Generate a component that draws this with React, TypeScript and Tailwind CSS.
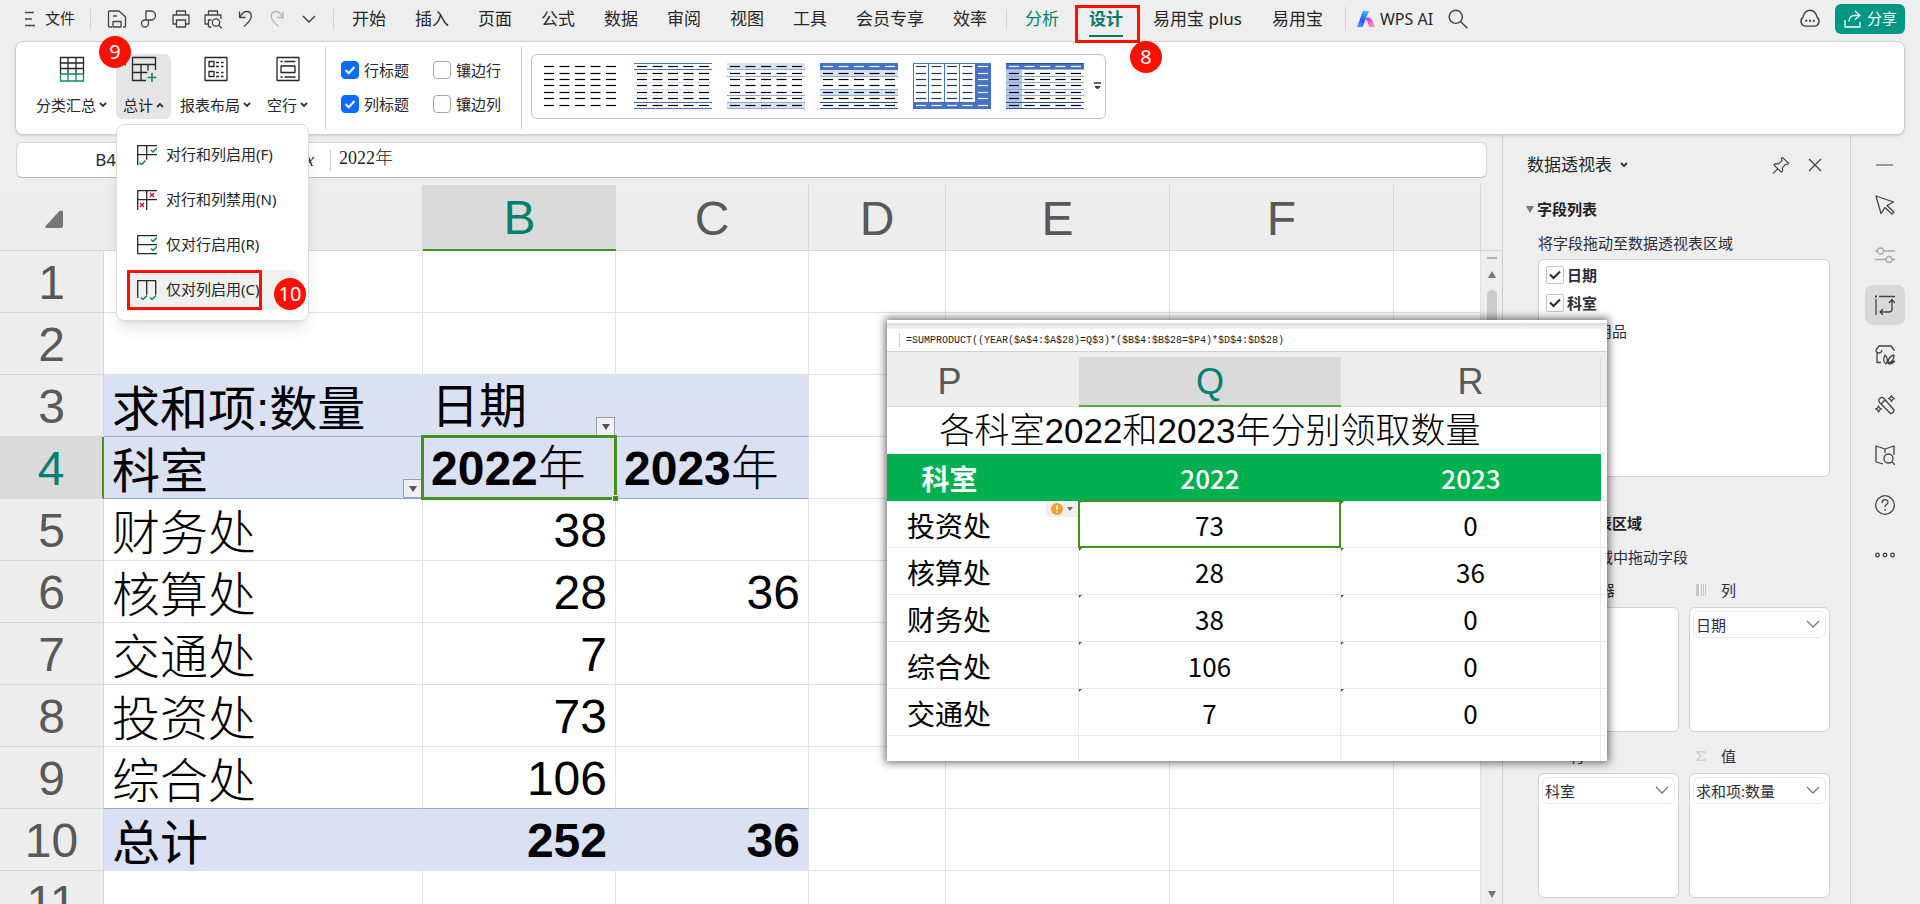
import { useState, type ReactNode } from 'react';
import { clsx } from 'clsx';

type Line = { label: string; values: [string, string]; kind?: 'head' | 'total' };

const tabs = ['开始', '插入', '页面', '公式', '数据', '审阅', '视图', '工具', '会员专享', '效率'];

const sheetRows: Line[] = [
  { label: '', values: ['', ''] },
  { label: '', values: ['', ''] },
  { label: '求和项:数量', values: ['日期', ''], kind: 'head' },
  { label: '科室', values: ['2022年', '2023年'], kind: 'head' },
  { label: '财务处', values: ['38', ''] },
  { label: '核算处', values: ['28', '36'] },
  { label: '交通处', values: ['7', ''] },
  { label: '投资处', values: ['73', ''] },
  { label: '综合处', values: ['106', ''] },
  { label: '总计', values: ['252', '36'], kind: 'total' },
  { label: '', values: ['', ''] },
];

const formulaRows = [
  ['投资处', '73', '0'],
  ['核算处', '28', '36'],
  ['财务处', '38', '0'],
  ['综合处', '106', '0'],
  ['交通处', '7', '0'],
];

function Icon({ children, className = 'h-5 w-5', box = 20 }: { children: ReactNode; className?: string; box?: number }) {
  return (
    <svg
      viewBox={`0 0 ${box} ${box}`}
      className={clsx('shrink-0', className)}
      fill="none"
      stroke="currentColor"
      strokeWidth="1.3"
      strokeLinejoin="round"
      aria-hidden="true"
    >
      {children}
    </svg>
  );
}

function Caret({ up = false }: { up?: boolean }) {
  return (
    <svg viewBox="0 0 8 6" className="h-1.5 w-2 shrink-0" fill="none" stroke="#333" strokeWidth="1.8" aria-hidden="true">
      <path d={up ? 'M1 5l3-3 3 3' : 'M1 1l3 3 3-3'} />
    </svg>
  );
}

function Badge({ children, className }: { children: ReactNode; className: string }) {
  return (
    <span
      className={clsx(
        'absolute z-40 flex h-8 w-8 items-center justify-center rounded-full bg-[#ff0f00] text-xl font-normal text-white',
        className,
      )}
    >
      {children}
    </span>
  );
}

function Divider({ className }: { className: string }) {
  return <span className={clsx('w-px shrink-0 bg-[#cfcfcf]', className)} />;
}

function TopBar() {
  return (
    <header className="relative z-20 flex h-[41px] shrink-0 items-center pb-1 pl-6 pr-[15px] text-[17px] text-[#262626]">
      <button className="flex items-center gap-2.5 text-[15px]">
        <svg viewBox="0 0 11 16" className="h-4 w-[11px]" stroke="#444" strokeWidth="1.3" aria-hidden="true">
          <path d="M1 1.500h9M1 8h7M1 14.500h10" />
        </svg>
        文件
      </button>
      <Divider className="ml-[15px] h-5" />

      <div className="ml-4 flex items-center gap-3 text-[#444]">
        <button title="保存">
          <Icon>
            <path d="M5 18H2.500a1 1 0 0 1-1-1V3a1 1 0 0 1 1-1H12l6.500 6v9a1 1 0 0 1-1 1H16M6 18v-5.500h8V18zM6 7h4" />
          </Icon>
        </button>
        <button title="输出为PDF">
          <Icon>
            <path d="M7 11V2h5a4.500 4.500 0 0 1 0 9H6a3.500 3.500 0 1 0 3.500 3.500V11" />
          </Icon>
        </button>
        <button title="打印">
          <Icon>
            <path d="M5.500 6V2h9v4M5 15H2V6h16v9h-3M5.500 11h9v7h-9z" />
          </Icon>
        </button>
        <button title="打印预览">
          <Icon>
            <path d="M5.500 6V2h9v4M5 15H2V6h16v4M5.500 18v-7h3M5.500 18h3" />
            <circle cx="13" cy="13.500" r="3.700" />
            <path d="M15.800 16.200l3 3" />
          </Icon>
        </button>
        <button title="撤销">
          <Icon>
            <path d="M4.500 2.500v6h6M5 8c2-4 4-5.500 6.500-5.500 3 0 4.800 2 4.800 4.700 0 4-4 7-7.300 10.300" />
          </Icon>
        </button>
        <button title="恢复" className="text-[#b5b5b5]">
          <Icon>
            <path d="M16 2.500v6h-6M15.500 8c-2-4-4-5.500-6.500-5.500-3 0-4.800 2-4.800 4.700 0 4 4 7 7.300 10.300" />
          </Icon>
        </button>
        <button title="更多">
          <Icon>
            <path d="M4 7l6 6 6-6" strokeWidth="1.500" />
          </Icon>
        </button>
      </div>
      <Divider className="ml-3.5 h-5" />

      <nav className="ml-[18px] flex h-9 items-center gap-[29px] whitespace-nowrap">
        {tabs.map((tab) => (
          <button key={tab}>{tab}</button>
        ))}
      </nav>
      <Divider className="ml-[19px] h-5" />
      <nav className="ml-[18px] flex items-center gap-[30px] whitespace-nowrap">
        <button className="text-[#008573]">分析</button>
        <button className="relative flex h-9 items-center font-bold text-[#007a68]">
          设计
          <span className="absolute inset-x-0 bottom-0 h-0.5 bg-[#007a68]" />
          <span className="absolute -bottom-1.5 -left-3.5 -right-[17px] top-1 border-3 border-[#ff0f00]" />
          <Badge className="-right-[39px] top-10">8</Badge>
        </button>
        <button>易用宝 plus</button>
        <button>易用宝</button>
      </nav>
      <Divider className="ml-[22px] h-6" />

      <button className="ml-2.5 flex items-center gap-1 whitespace-nowrap text-base">
        <svg viewBox="0 0 20 18" className="h-[18px] w-5" aria-hidden="true">
          <defs>
            <linearGradient id="aiLeft" x1="0" y1="1" x2="0.6" y2="0">
              <stop offset="0" stopColor="#5fa0ff" />
              <stop offset="0.5" stopColor="#2c55f5" />
              <stop offset="1" stopColor="#37b7ff" />
            </linearGradient>
            <linearGradient id="aiRight" x1="0" y1="0" x2="0.7" y2="1">
              <stop offset="0" stopColor="#a238ff" />
              <stop offset="0.6" stopColor="#f850d8" />
              <stop offset="1" stopColor="#ffa08a" />
            </linearGradient>
          </defs>
          <path d="M7 1h6L6.500 17H1z" fill="url(#aiLeft)" />
          <path d="M9 8.500c3-2 6-1 7 1.500l3 7h-5.500l-2-5c-.6-1.500-1.500-2.500-2.500-3.500z" fill="url(#aiRight)" />
        </svg>
        WPS AI
      </button>
      <button title="搜索" className="ml-3.5 text-[#444]">
        <Icon className="h-[22px] w-[22px]">
          <circle cx="8" cy="8" r="6" />
          <path d="M12.500 12.500L18.500 18.500" />
        </Icon>
      </button>

      <div className="ml-auto flex items-center gap-3.5">
        <button title="云服务" className="text-[#444]">
          <Icon className="h-[22px] w-[22px]">
            <path d="M6 16.500a4.500 4.500 0 0 1-2.500-8C4.500 4.500 7 2 10 2s5.500 2.500 6.500 6.500a4.500 4.500 0 0 1-2.500 8z" />
            <path d="M5.700 11.500h1.800M9.100 11.500h1.800M12.500 11.500h1.800" strokeWidth="1.800" />
          </Icon>
        </button>
        <button className="flex h-[30px] items-center gap-1 rounded-md bg-[#009884] px-2 text-[15px] text-white">
          <Icon>
            <path d="M12 2l5 4.500-5 4M17 6.500h-5c-4 0-6 2-6 6M2 11v7h15v-5" />
          </Icon>
          分享
        </button>
      </div>
    </header>
  );
}

function RibbonButton({ icon, label, active = false, onClick }: { icon: ReactNode; label: string; active?: boolean; onClick?: () => void }) {
  return (
    <button
      onClick={onClick}
      className={clsx(
        'flex h-[65px] flex-col items-center justify-between rounded-md px-[7px] pb-0.5 pt-0.5 text-[15px]',
        active && 'bg-[#e5e5e5]',
      )}
    >
      {icon}
      <span className="flex items-center gap-[3px] whitespace-nowrap">
        {label}
        <Caret up={active} />
      </span>
    </button>
  );
}

function RibbonCheck({ label, checked = false }: { label: string; checked?: boolean }) {
  return (
    <label className="flex items-center gap-[5px] whitespace-nowrap">
      <span className="grid h-[18px] w-[18px]">
        <input
          type="checkbox"
          defaultChecked={checked}
          className="peer col-start-1 row-start-1 h-[18px] w-[18px] appearance-none rounded-sm border border-[#a5a5a5] bg-white checked:border-[#0a6cff] checked:bg-[#0a6cff]"
        />
        <svg viewBox="0 0 18 18" className="pointer-events-none col-start-1 row-start-1 hidden h-[18px] w-[18px] peer-checked:block" fill="none" stroke="#fff" strokeWidth="2">
          <path d="M4.500 9l3.200 3.200L13.500 6" />
        </svg>
      </span>
      {label}
    </label>
  );
}

const dashRows = [3, 10, 16, 22, 29, 35, 42];

function StyleThumb({ index }: { index: number }) {
  const dash = (y: number, color: string, from = 0, to = 5) =>
    [0, 1, 2, 3, 4].slice(from, to).map((c) => (
      <path key={`${y}-${c}`} d={`M${3 + c * 15.5} ${y + 0.5}h10`} stroke={color} strokeWidth="1.2" />
    ));
  const rule = (y: number, color: string) => <path d={`M0 ${y + 0.5}h78`} stroke={color} strokeWidth="1" />;

  return (
    <button title={`样式 ${index + 1}`}>
      <svg viewBox="0 0 78 46" className="h-[46px] w-[78px]" aria-hidden="true">
        {index === 1 && (
          <>
            {[0, 6, 39, 45].map((y) => <g key={y}>{rule(y, '#4472c4')}</g>)}
            {[13, 19, 26, 32].map((y) => <g key={y}>{rule(y, '#d9e1f2')}</g>)}
          </>
        )}
        {index === 2 && (
          <>
            <path d="M0 0h78v6H0zM0 39h78v6H0z" fill="#d9e1f2" />
            {[6, 13, 32, 39, 45].map((y) => <g key={y}>{rule(y, '#8ea9db')}</g>)}
          </>
        )}
        {index === 3 && (
          <>
            <path d="M0 0h78v7H0z" fill="#4472c4" />
            <path d="M0 7h78v6H0zM0 26h78v6H0z" fill="#d9e1f2" />
            {[13, 26, 32].map((y) => <g key={y}>{rule(y, '#8ea9db')}</g>)}
            {[39, 45].map((y) => <g key={y}>{rule(y, '#305496')}</g>)}
          </>
        )}
        {index === 4 && (
          <>
            <path d="M62 0h16v46H62zM0 39h78v7H0z" fill="#4472c4" />
            <path d="M.5 0v46M15.500 0v46M31.500 0v46M46.500 0v46M0 .5h78" stroke="#4472c4" />
          </>
        )}
        {index === 5 && (
          <>
            <path d="M0 0h78v6H0z" fill="#4472c4" />
            <path d="M0 6h16v40H0z" fill="#b4c6e7" />
            {[6, 13, 19, 26, 32].map((y) => <g key={y}>{rule(y, '#8ea9db')}</g>)}
            {[0, 39, 45].map((y) => <g key={y}>{rule(y, '#305496')}</g>)}
          </>
        )}
        {dashRows.map((y, r) => {
          if (index === 4) {
            return (
              <g key={y}>
                {dash(y, r === 6 ? '#fff' : '#1f3864', 0, 4)}
                {dash(y, '#fff', 4)}
              </g>
            );
          }
          return <g key={y}>{dash(y, r === 0 && index > 2 ? '#fff' : '#000')}</g>;
        })}
      </svg>
    </button>
  );
}

const tick = (x: number, y: number) => <path d={`M${x} ${y}l2 2 4-4`} stroke="#0d8f66" strokeWidth="1.6" />;
const cross = (x: number, y: number) => <path d={`M${x} ${y}l4 4M${x + 4} ${y}l-4 4`} stroke="#c8103e" strokeWidth="1.4" />;

const totalOptions = [
  { label: '对行和列启用(F)', icon: <Icon><path d="M.7 20V.7H20M.7 9.700H20M9.700.7v14" />{tick(14, 5)}{tick(2.5, 17.5)}</Icon> },
  { label: '对行和列禁用(N)', icon: <Icon><path d="M.7 20V.7H20M.7 9.700H20M9.700.7V20" />{cross(13, 3)}{cross(3, 13)}</Icon> },
  { label: '仅对行启用(R)', icon: <Icon><path d="M20 .7H.7v18H20M.7 9.700H20" />{tick(14, 4.5)}{tick(14, 13.5)}</Icon> },
  { label: '仅对列启用(C)', icon: <Icon><path d="M.7 18V.7h18v14M9.700.7v14" />{tick(4, 17.5)}{tick(13, 17.5)}</Icon> },
];

function TotalMenu() {
  return (
    <div
      role="menu"
      className="absolute left-0 top-[70px] z-30 flex w-[193px] flex-col gap-[5px] rounded-lg border border-[#dcdcdc] bg-white px-2.5 py-2.5 text-[15px] text-[#262626] shadow-lg"
    >
      {totalOptions.map((option, i) => (
        <button
          key={option.label}
          role="menuitem"
          className={clsx(
            'relative flex h-10 items-center gap-[9px] whitespace-nowrap rounded-md pl-2.5',
            i === 3 && 'bg-[#f0f0f0]',
          )}
        >
          {option.icon}
          {option.label}
          {i === 3 && (
            <>
              <span className="absolute inset-y-0 left-0 w-[135px] border-3 border-[#ff0f00]" />
              <Badge className="-right-2 top-2">10</Badge>
            </>
          )}
        </button>
      ))}
    </div>
  );
}

function Ribbon() {
  const [open, setOpen] = useState(true);

  return (
    <section className="relative z-10 mx-[15px] flex h-[94px] shrink-0 items-center rounded-lg border border-[#cfcfcf] bg-white pb-1 pl-[13px] text-[15px] text-[#262626] shadow">
      <div className="flex gap-0.5">
        <RibbonButton
          label="分类汇总"
          icon={
            <Icon className="h-[26px] w-[26px]" box={26}>
              <path d="M1.500 18V1.500h23V18M9 1.500V18M17 1.500V18M1.500 7h23M1.500 12.500h23" />
              <path d="M1.500 18h23v7h-23zM9 18v7M17 18v7" stroke="#0d8f66" />
            </Icon>
          }
        />
        <div className="relative">
          <RibbonButton
            label="总计"
            active={open}
            onClick={() => setOpen(!open)}
            icon={
              <Icon className="h-[26px] w-[26px]" box={26}>
                <path d="M15 24.500H1.500v-23h23V14M1.500 8.500h23M10 8.500v16M1.500 16.500h15M17 8.500v6" />
                <path d="M21 17v9M16.500 21.500h9" stroke="#0d8f66" strokeWidth="1.700" />
              </Icon>
            }
          />
          <Badge className="-left-[17px] -top-[18px]">
            9
            <svg viewBox="0 0 8 8" className="absolute bottom-0.5 right-1 h-2 w-2" fill="#ff0f00" aria-hidden="true">
              <path d="M0 4l7-4v8z" />
            </svg>
          </Badge>
          {open && <TotalMenu />}
        </div>
        <RibbonButton
          label="报表布局"
          icon={
            <Icon className="h-[26px] w-[26px]" box={26}>
              <path d="M2 1.500h22v23H2zM6 5.500h5v5H6zM6 15.500h5v5H6z" />
              <path d="M13 6.500h3M18 6.500h2.500M13 10.500h3M18 10.500h2.500M13 16.500h3M18 16.500h2.500M13 20.500h3M18 20.500h2.500" />
            </Icon>
          }
        />
        <RibbonButton
          label="空行"
          icon={
            <Icon className="h-[26px] w-[26px]" box={26}>
              <path d="M2 1.500h22v23H2zM6 10h14v6.500H6z" />
              <path d="M5.500 5.500h2M9.500 5.500h11M5.500 21h2M9.500 21h11" />
            </Icon>
          }
        />
      </div>
      <Divider className="ml-2.5 mt-1 h-[82px]" />

      <div className="ml-[15px] mt-0.5 grid grid-cols-[92px_80px] gap-y-3">
        <RibbonCheck label="行标题" checked />
        <RibbonCheck label="镶边行" />
        <RibbonCheck label="列标题" checked />
        <RibbonCheck label="镶边列" />
      </div>
      <Divider className="ml-2 mt-1 h-[82px]" />

      <div className="ml-[9px] flex h-[65px] items-center gap-[15px] rounded-md border border-[#c4c4c4] px-[9px]">
        {[0, 1, 2, 3, 4, 5].map((i) => (
          <StyleThumb key={i} index={i} />
        ))}
        <button title="更多样式" className="-ml-1.5 -mr-1.5 flex h-full items-center">
          <svg viewBox="0 0 9 9" className="h-[9px] w-[9px]" fill="#333" stroke="#333" aria-hidden="true">
            <path d="M1 1h7" strokeWidth="1.500" />
            <path d="M2 4.500h5L4.500 7z" />
          </svg>
        </button>
      </div>
    </section>
  );
}

function FormulaBar() {
  return (
    <div className="ml-4 mr-[15px] mt-[7px] flex h-9 shrink-0 items-center rounded-md border border-[#d5d5d5] border-b-[#bdbdbd] bg-white text-[#262626]">
      <input aria-label="名称框" defaultValue="B4" className="w-[99px] bg-transparent text-right text-[17px] outline-none" />
      <span className="ml-[185px] font-['Liberation_Serif'] text-lg italic">fx</span>
      <Divider className="ml-4 h-[21px]" />
      <input
        aria-label="编辑栏"
        defaultValue="2022年"
        className="ml-2 min-w-0 flex-1 bg-transparent pb-1 font-['Liberation_Serif','Noto_Sans_CJK_SC',serif] text-lg font-light outline-none"
      />
    </div>
  );
}

function FilterArrow() {
  return (
    <button title="筛选" className="absolute bottom-0 right-0 z-10 flex h-[19px] w-[19px] items-center justify-center border border-[#9a9db0] bg-[#f0f0f2]">
      <svg viewBox="0 0 8 6" className="h-1.5 w-2" fill="#555" aria-hidden="true">
        <path d="M0 0h8L4 6z" />
      </svg>
    </button>
  );
}

function Sheet() {
  return (
    <div className="mt-[7px] flex min-h-0 flex-1">
      <div className="min-w-0 flex-1 overflow-hidden bg-white">
        <table className="w-full table-fixed border-separate border-spacing-0 font-['Liberation_Sans','Noto_Sans_CJK_SC',sans-serif] text-5xl leading-[48px] text-black">
          <colgroup>
            <col className="w-[104px]" />
            <col className="w-[319px]" />
            <col className="w-[193px]" />
            <col className="w-[193px]" />
            <col className="w-[137px]" />
            <col className="w-[224px]" />
            <col className="w-[224px]" />
            <col />
          </colgroup>
          <thead>
            <tr className="h-[66px] bg-[#ededed] text-[#595959]">
              <th className="border-b border-[#d6d6d6] bg-[#ededed] p-0 pt-0.5">
                <svg viewBox="0 0 18 18" className="ml-[45px] h-[18px] w-[18px]" fill="#777" aria-hidden="true">
                  <path d="M16 0.500Q18 0 18 2v14q0 2-2 2H2q-2.500 0-1.500-2L14.500 1z" />
                </svg>
              </th>
              {['A', 'B', 'C', 'D', 'E', 'F', ''].map((col) => (
                <th
                  key={col}
                  className={clsx(
                    'p-0 pt-0.5 font-normal',
                    col === 'B' ? 'border-b-2 border-[#43911f] bg-[#dadada] text-[#008070]' : 'border-b border-r border-[#d6d6d6]',
                  )}
                >
                  {col}
                </th>
              ))}
            </tr>
          </thead>
          <tbody>
            {sheetRows.map((row, i) => {
              const n = i + 1;
              const fill = row.kind !== undefined;
              const cell = clsx(
                'relative h-[62px] whitespace-nowrap border-b border-r px-2 pb-0',
                fill ? 'border-r-[#dae1f2] bg-[#dae1f2]' : 'border-r-[#e2e2e2]',
                n === 3 || n === 4 || n === 9 ? 'border-b-[#8ea9db]' : fill || n === 2 ? 'border-b-[#dae1f2]' : 'border-b-[#e2e2e2]',
              );
              return (
                <tr key={n}>
                  <th
                    className={clsx(
                      'h-[62px] border-b border-[#d6d6d6] p-0 pt-0.5 font-normal',
                      n === 4 ? 'border-r-2 border-r-[#43911f] bg-[#dadada] text-[#008070]' : 'border-r bg-[#ededed] text-[#595959]',
                    )}
                  >
                    {n}
                  </th>
                  <td className={clsx(cell, 'pt-2', fill ? 'font-normal' : 'font-light')}>
                    {row.label}
                    {n === 4 && <FilterArrow />}
                  </td>
                  {row.values.map((value, c) => (
                    <td
                      key={c}
                      className={clsx(
                        cell,
                        'pt-0.5',
                        row.kind === 'head' ? 'text-left' : 'text-right',
                        row.kind === 'total' && 'font-bold',
                        n === 4 && 'font-light',
                      )}
                    >
                      {row.kind === 'head' ? (
                        <>
                          <span className="font-bold">{value.replace(/\D/g, '')}</span>
                          {value.replace(/\d/g, '')}
                        </>
                      ) : (
                        value
                      )}
                      {n === 3 && c === 0 && <FilterArrow />}
                      {n === 4 && c === 0 && (
                        <span className="absolute -inset-0.5 z-10 border-3 border-[#43911f]">
                          <span className="absolute -bottom-1 -right-1 h-1.5 w-1.5 border-l border-t border-white bg-[#43911f]" />
                        </span>
                      )}
                    </td>
                  ))}
                  {['D', 'E', 'F', 'G'].map((col) => (
                    <td key={col} className="h-[62px] border-b border-r border-[#e2e2e2] p-0" />
                  ))}
                </tr>
              );
            })}
          </tbody>
        </table>
      </div>

      {/* vertical scroll bar */}
      <div className="flex w-[21px] shrink-0 flex-col items-center pb-1.5 text-[#777]">
        <span className="h-[66px] w-full border-b border-[#d6d6d6]" />
        <span className="mt-1.5 h-0.5 w-2.5 bg-[#b5b5b5]" />
        <svg viewBox="0 0 8 7" className="mt-3 h-[7px] w-2" fill="currentColor" aria-hidden="true">
          <path d="M4 0l4 7H0z" />
        </svg>
        <span className="mt-3 h-72 w-2.5 rounded-full bg-[#cccccc]" />
        <svg viewBox="0 0 8 7" className="mt-auto h-[7px] w-2" fill="currentColor" aria-hidden="true">
          <path d="M0 0h8L4 7z" />
        </svg>
      </div>
    </div>
  );
}

function FieldCheck({ label, checked = false }: { label: string; checked?: boolean }) {
  return (
    <label className={clsx('flex h-7 items-center gap-[3px]', checked && 'font-bold')}>
      <span className="grid h-[18px] w-[18px]">
        <input
          type="checkbox"
          defaultChecked={checked}
          className="peer col-start-1 row-start-1 h-[18px] w-[18px] appearance-none rounded-xs border border-[#c4c4c8] bg-white"
        />
        <svg viewBox="0 0 18 18" className="pointer-events-none col-start-1 row-start-1 hidden h-[18px] w-[18px] peer-checked:block" fill="none" stroke="#23283a" strokeWidth="2">
          <path d="M4 8.500l3.500 3.500L14 5.500" />
        </svg>
      </span>
      {label}
    </label>
  );
}

function DropArea({ title, icon, field }: { title: string; icon?: ReactNode; field?: string }) {
  return (
    <div>
      <div className="flex h-[34px] items-center pl-[7px]">
        <span className="flex w-[25px] items-center text-[#c8c8c8]">{icon}</span>
        {title}
      </div>
      <div className="h-[125px] rounded-md border border-[#d0d0d0] bg-white p-[3px]">
        {field && (
          <div className="relative">
            <select
              aria-label={title}
              className="h-[27px] w-full appearance-none rounded-md border border-[#e9e9f0] bg-white pl-0.5 text-[15px] leading-6 outline-none"
            >
              <option>{field}</option>
            </select>
            <svg viewBox="0 0 14 8" className="pointer-events-none absolute right-1.5 top-[9px] h-2 w-3.5" fill="none" stroke="#777" strokeWidth="1.3" aria-hidden="true">
              <path d="M1 1l6 6 6-6" />
            </svg>
          </div>
        )}
      </div>
    </div>
  );
}

function SectionTitle({ children }: { children: ReactNode }) {
  return (
    <h3 className="flex items-center gap-[3px] text-[15px] font-bold text-[#222]">
      <svg viewBox="0 0 8 7" className="h-[7px] w-2" fill="#777" aria-hidden="true">
        <path d="M0 0h8L4 7z" />
      </svg>
      {children}
    </h3>
  );
}

function PivotPanel() {
  return (
    <aside className="flex w-[349px] shrink-0 flex-col border-x border-[#cfcfcf] pl-[23px] pr-5 text-[15px] leading-6 text-[#2a2d3c]">
      <div className="mt-[18px] flex items-center text-[17px] text-[#262626]">
        <button className="mr-auto flex items-center gap-2 pl-px">
          数据透视表
          <Caret />
        </button>
        <button title="固定" className="mr-[18px] text-[#444]">
          <Icon className="h-[18px] w-[18px]">
            <path d="M11.500 1.500l7 6.500-1.500 1.500-2-.3-3.500 4 .3 3.300-1.600 1.500-8-8L3.700 8.500l3.500.2 4-3.500-.9-2.200zM6.500 14L1 19.500" />
          </Icon>
        </button>
        <button title="关闭" className="mr-2 text-[#444]">
          <Icon className="h-3.5 w-3.5" box={14}>
            <path d="M1 1l12 12M13 1L1 13" />
          </Icon>
        </button>
      </div>

      <div className="mt-5">
        <SectionTitle>字段列表</SectionTitle>
        <p className="mt-2.5 pl-3">将字段拖动至数据透视表区域</p>
        <div className="ml-3 mt-1 h-[218px] rounded-md border border-[#d0d0d0] bg-white px-[7px] py-px">
          <FieldCheck label="日期" checked />
          <FieldCheck label="科室" checked />
          <FieldCheck label="办公用品" />
        </div>
      </div>

      <div className="mt-[34px]">
        <SectionTitle>数据透视表区域</SectionTitle>
        <p className="mt-2.5 pl-3">在以下区域中拖动字段</p>
        <div className="ml-3 mt-1 grid grid-cols-2 gap-x-2.5 gap-y-[7px]">
          <DropArea title="筛选器" />
          <DropArea
            title="列"
            field="日期"
            icon={
              <svg viewBox="0 0 10 12" className="h-3 w-2.5" fill="currentColor" aria-hidden="true">
                <path d="M0 0h3v12H0zM5 0h1v12H5zM7 0h1v12H7zM9 0h1v12H9z" />
              </svg>
            }
          />
          <DropArea title="行" field="科室" />
          <DropArea
            title="值"
            field="求和项:数量"
            icon={
              <Icon className="h-3 w-2.5" box={12}>
                <path d="M11 3V1H1l5 5-5 5h10V9" />
              </Icon>
            }
          />
        </div>
      </div>
    </aside>
  );
}

const railTools = [
  { title: '选择', icon: <path d="M1 1l17.500 6-6.500 3.500 7 6.500-2 2-7-6.500-4 6z" /> },
  { title: '属性', icon: <><circle cx="5.500" cy="6" r="3" /><circle cx="14" cy="14.500" r="3" /><path d="M0 6h2.500M8.500 6H20M0 14.500h11M17 14.500h3" /></> },
  { title: '透视表', icon: <><path d="M4 1.500h16M1 4v16" /><path d="M0 1.500h2" strokeWidth="2" /><path d="M17 5v9q0 3-3 3H5M14 8l3-3.500L20 8M8 14l-3 3 3 3" /></> },
  { title: '美化', icon: <path d="M2 8.500v9h4M1 5l3-4h12l3 4M1 5c0 4 5.500 4 6 0M16 1l3.500 4.500M11 19c-3-2-3-5-1-9 3 3 3 6 1 9zM13 18c0-5 2-7 6-8 0 4-2 7-6 8zM14 19c2-2 3.500-3 6-3-1.500 2-3 3-6 3z" /> },
  { title: '工具箱', icon: <path d="M4 4.500q2-3.500 5-1l10 11.500q0 3-3.500 3.500L5.500 8.500q-2-1.500-1.500-4zM6.500 8.500L10 5M16.500.5l1 2 2 1-2 1-1 2-1-2-2-1 2-1zM3.500 11l1 2 2 1-2 1-1 2-1-2-2-1 2-1z" /> },
  { title: '查找', icon: <><path d="M10 4L1 1v16l7 2M10 4l9-3v9M10 4v4" /><circle cx="13.500" cy="13.500" r="4.500" /><path d="M17 17l3 3" /></> },
  { title: '帮助', icon: <><circle cx="10" cy="10" r="9.300" /><path d="M7 8c0-4.500 6-4 6-.8 0 2.300-3 2.300-3 5M10 14v1.800" /></> },
  { title: '更多', icon: <><circle cx="2.500" cy="10" r="1.800" /><circle cx="10" cy="10" r="1.800" /><circle cx="17.500" cy="10" r="1.800" /></> },
];

function Rail() {
  return (
    <nav className="flex w-[69px] shrink-0 flex-col items-center gap-2.5 pr-0.5 text-[#444]">
      <button title="收起" className="mt-5 flex h-5 w-10 items-center justify-center">
        <span className="h-0.5 w-[17px] bg-[#999]" />
      </button>
      {railTools.map((tool, i) => (
        <button
          key={tool.title}
          title={tool.title}
          className={clsx(
            'flex h-10 w-10 items-center justify-center rounded-lg',
            i === 1 && 'text-[#aaa]',
            i === 2 && 'bg-[#d8d8d8]',
          )}
        >
          <Icon>{tool.icon}</Icon>
        </button>
      ))}
    </nav>
  );
}

function FormulaWindow() {
  return (
    <section className="absolute left-[887px] top-80 z-10 h-[441px] w-[720px] overflow-hidden bg-white text-black shadow-[0_0_8px_2px_rgba(0,0,0,0.55)]">
      <div className="mt-[3px] h-1.5 bg-linear-to-b from-[#dcdcdc] to-[#f2f2f2]" />
      <div className="flex h-[23px] items-center border-b border-[#d0d0d0] pl-3">
        <Divider className="h-3.5" />
        <span className="ml-1.5 font-['Liberation_Mono'] text-[10px] text-[#222]">
          =SUMPRODUCT((YEAR($A$4:$A$28)=Q$3)*($B$4:$B$28=$P4)*$D$4:$D$28)
        </span>
      </div>
      <div className="h-[5px] bg-[#ededed]" />
      {/* column P starts outside the left edge of the window */}
      <table className="-ml-[67px] w-[787px] table-fixed border-separate border-spacing-0 text-center font-['Noto_Sans_CJK_SC',sans-serif] text-[26px] leading-[44px]">
        <colgroup>
          <col className="w-[259px]" />
          <col className="w-[262px]" />
          <col className="w-[260px]" />
          <col />
        </colgroup>
        <thead>
          <tr className="bg-[#ededed] font-['Liberation_Sans'] text-4xl leading-[47px] text-[#595959]">
            <th className="h-[50px] border-b border-[#dcdcdc] p-0 font-normal">P</th>
            <th className="border-b-2 border-[#5aa63c] bg-[#dadada] p-0 font-normal text-[#008070]">Q</th>
            <th className="border-b border-r border-[#dcdcdc] p-0 font-normal">R</th>
            <th className="border-b border-[#dcdcdc] p-0" />
          </tr>
        </thead>
        <tbody>
          <tr>
            <td colSpan={3} className="h-[47px] whitespace-nowrap border-r border-[#e8e8e8] p-0 font-['Liberation_Sans','Noto_Sans_CJK_SC',sans-serif] text-[35px] font-light">
              各科室<span className="font-normal">2022</span>和<span className="font-normal">2023</span>年分别领取数量
            </td>
            <td className="border-b border-[#e8e8e8] p-0" />
          </tr>
          <tr className="bg-[#00b050] font-bold text-white">
            <td className="h-[47px] p-0 text-[28px]">科室</td>
            <td className="p-0 font-medium">2022</td>
            <td className="p-0 font-medium">2023</td>
            <td className="border-b border-[#e8e8e8] bg-white p-0" />
          </tr>
          {formulaRows.map(([dept, a, b], i) => (
            <tr key={dept}>
              <td className="relative h-[47px] border-b border-r border-[#e8e8e8] p-0 pt-0.5 text-[28px]">
                {dept}
                {i === 0 && (
                  <span className="absolute right-0 top-0 flex h-4 w-8 items-center justify-center gap-1 bg-[#f0f0f0]">
                    <svg viewBox="0 0 12 12" className="h-3 w-3" aria-hidden="true">
                      <circle cx="6" cy="6" r="6" fill="#f0a028" />
                      <path d="M6 2.500v4.500M6 8.200v1.500" stroke="#fff" strokeWidth="1.500" />
                    </svg>
                    <svg viewBox="0 0 6 4" className="h-1 w-1.5" fill="#666" aria-hidden="true">
                      <path d="M0 0h6L3 4z" />
                    </svg>
                  </span>
                )}
              </td>
              {[a, b].map((value, c) => (
                <td key={c} className="relative border-b border-r border-[#e8e8e8] p-0 pt-0.5">
                  {value}
                  <svg viewBox="0 0 3 3" className="absolute left-0 top-0 h-[3px] w-[3px]" fill="#108010" aria-hidden="true">
                    <path d="M0 0h3L0 3z" />
                  </svg>
                  {i === 0 && c === 0 && <span className="absolute -inset-px border-2 border-[#43911f]" />}
                </td>
              ))}
              <td className="border-b border-[#e8e8e8] p-0" />
            </tr>
          ))}
          <tr>
            <td className="h-[47px] border-r border-[#e8e8e8] p-0" />
            <td className="border-r border-[#e8e8e8] p-0" />
            <td className="border-r border-[#e8e8e8] p-0" />
            <td className="p-0" />
          </tr>
        </tbody>
      </table>
    </section>
  );
}

export default function App() {
  return (
    <div className="relative flex h-screen flex-col overflow-hidden bg-[#eeeeee] font-['Noto_Sans','Noto_Sans_CJK_SC',sans-serif]">
      <TopBar />
      <Ribbon />
      <main className="flex min-h-0 flex-1">
        <div className="flex min-w-0 flex-1 flex-col">
          <FormulaBar />
          <Sheet />
        </div>
        <PivotPanel />
        <Rail />
      </main>
      <FormulaWindow />
    </div>
  );
}
